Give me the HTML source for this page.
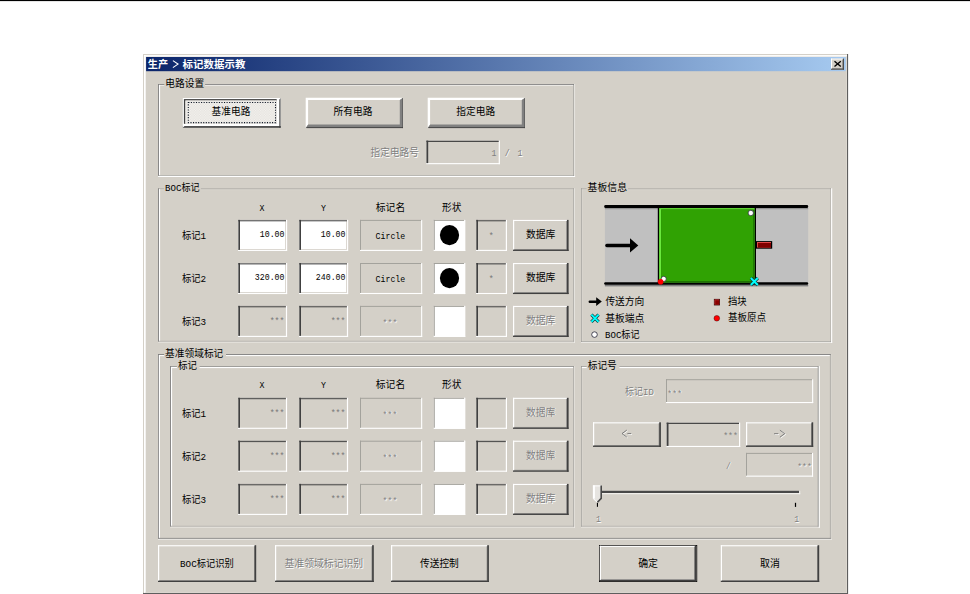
<!DOCTYPE html>
<html><head><meta charset="utf-8"><title>dialog</title>
<style>html,body{margin:0;padding:0;background:#fff;overflow:hidden}body{width:970px;height:594px;font-family:"Liberation Mono",monospace}
.t{font-family:"Liberation Mono","Noto Sans CJK SC",monospace;font-size:9.9px}
.b{font-family:"Liberation Sans","Noto Sans CJK SC",sans-serif;font-size:9.9px;font-weight:bold}</style></head>
<body>
<svg width="970" height="594" viewBox="0 0 970 594" font-family="'Liberation Mono', monospace" style="display:block" role="img" aria-label="生产 &gt; 标记数据示教">
<defs><pattern id="dz" patternUnits="userSpaceOnUse" width="2.5" height="2.5"><rect width="2.5" height="2.5" fill="#e6e3de"/><rect width="1.25" height="1.25" fill="#f3f2ef"/><rect x="1.25" y="1.25" width="1.25" height="1.25" fill="#f3f2ef"/></pattern><linearGradient id="tg" x1="0" y1="0" x2="1" y2="0"><stop offset="0" stop-color="#0a246a"/><stop offset="1" stop-color="#a6caf0"/></linearGradient>
</defs>
<rect x="0" y="0" width="970" height="594" fill="#ffffff"/>
<rect x="0" y="0" width="970" height="1.1" fill="#000000"/>
<rect x="143" y="54" width="705.1" height="540" fill="#5e5e5e"/>
<rect x="143" y="54" width="704" height="538.9" fill="#d4d0c8"/>
<rect x="144" y="55.1" width="1.7" height="537.8" fill="#ffffff"/>
<rect x="144" y="55.1" width="703" height="1.5" fill="#ffffff"/>
<rect x="845.9" y="56.6" width="1.1" height="536.3" fill="#dcd8d0"/>
<rect x="145.7" y="591.9" width="701.3" height="1" fill="#dcd8d0"/>
<rect x="146.1" y="57" width="699.7" height="14.2" fill="url(#tg)"/>
<text class="b" x="147.8" y="67.71" textLength="20.2" lengthAdjust="spacingAndGlyphs" fill="#ffffff">生产</text>
<path d="M172.9 60.6 L178 64.1 L172.9 67.6" stroke="#fff" stroke-width="1.15" fill="none"/>
<text class="b" x="182.6" y="67.71" textLength="62.8" lengthAdjust="spacingAndGlyphs" fill="#ffffff">标记数据示教</text>
<rect x="831" y="58.6" width="12.9" height="11.1" fill="#d4d0c8"/>
<rect x="831" y="58.6" width="12" height="0.9" fill="#ffffff"/>
<rect x="831" y="58.6" width="1" height="10.4" fill="#ffffff"/>
<rect x="842.3" y="59.5" width="0.6" height="9.5" fill="#808080"/>
<rect x="832" y="68.1" width="10.9" height="0.6" fill="#808080"/>
<rect x="842.9" y="58.6" width="1" height="11.1" fill="#404040"/>
<rect x="831" y="68.7" width="12.9" height="1" fill="#404040"/>
<path d="M834.5 61.2 L840.8 66.6 M840.8 61.2 L834.5 66.6" stroke="#000" stroke-width="1.35" fill="none"/>
<rect x="158.1" y="84" width="6.2" height="0.9" fill="#808080"/>
<rect x="205.1" y="84" width="368.9" height="0.9" fill="#808080"/>
<rect x="159" y="84.9" width="5.3" height="1.1" fill="#ffffff" fill-opacity="0.5"/>
<rect x="205.1" y="84.9" width="368" height="1.1" fill="#ffffff" fill-opacity="0.5"/>
<rect x="158.1" y="84" width="0.9" height="91.9" fill="#808080"/>
<rect x="159" y="84.9" width="1.1" height="90.1" fill="#ffffff"/>
<rect x="158.1" y="175" width="415.9" height="0.9" fill="#808080" fill-opacity="0.45"/>
<rect x="158.1" y="175.9" width="417" height="1.1" fill="#ffffff"/>
<rect x="573.1" y="84" width="0.9" height="91.9" fill="#808080" fill-opacity="0.45"/>
<rect x="574" y="84" width="1.1" height="93" fill="#ffffff" fill-opacity="0.4"/>
<text class="t" x="165.3" y="87.41" textLength="39" lengthAdjust="spacingAndGlyphs" fill="#000000">电路设置</text>
<rect x="182.8" y="98" width="98" height="29.8" fill="#ffffff"/>
<rect x="279" y="98" width="1.8" height="29.8" fill="#808080"/>
<rect x="182.8" y="126.1" width="98" height="1.7" fill="#404040"/>
<path d="M182.8 127.8 L182.8 126.1 L184.5 126.1 Z" fill="#fff"/>
<path d="M280.8 98 L279 98 L279 99.8 Z" fill="#fff"/>
<rect x="183.9" y="99.1" width="92.8" height="24.7" fill="#404040"/>
<rect x="185.4" y="100.5" width="91.3" height="23.3" fill="#eae8e4"/>
<rect x="185.4" y="100.5" width="91.3" height="23.3" fill="url(#dz)"/>
<rect x="188.3" y="102.5" width="87.2" height="20.1" fill="none" stroke="#0c1424" stroke-width="1.05" stroke-dasharray="1.1,1.45"/>
<text class="t" x="211.6" y="115.21" textLength="38.8" lengthAdjust="spacingAndGlyphs" fill="#000000">基准电路</text>
<rect x="305.7" y="97.7" width="97.3" height="30.4" fill="#d4d0c8"/>
<path d="M305.7 97.7 H403 L399.8 100.1 H308.1 V124.4 L305.7 128.1 Z" fill="#fff"/>
<path d="M403 97.7 V128.1 H305.7 L308.1 124.4 H399.8 V100.1 Z" fill="#808080"/>
<rect x="402.4" y="98.3" width="0.6" height="29.8" fill="#505050"/>
<rect x="306.5" y="127.2" width="96.5" height="0.9" fill="#404040"/>
<text class="t" x="333.6" y="115.11" textLength="39" lengthAdjust="spacingAndGlyphs" fill="#000000">所有电路</text>
<rect x="427.7" y="97.7" width="97.3" height="30.4" fill="#d4d0c8"/>
<path d="M427.7 97.7 H525 L521.8 100.1 H430.1 V124.4 L427.7 128.1 Z" fill="#fff"/>
<path d="M525 97.7 V128.1 H427.7 L430.1 124.4 H521.8 V100.1 Z" fill="#808080"/>
<rect x="524.4" y="98.3" width="0.6" height="29.8" fill="#505050"/>
<rect x="428.5" y="127.2" width="96.5" height="0.9" fill="#404040"/>
<text class="t" x="456.2" y="115.11" textLength="39" lengthAdjust="spacingAndGlyphs" fill="#000000">指定电路</text>
<text class="t" x="371.3" y="157.11" textLength="48.5" lengthAdjust="spacingAndGlyphs" fill="#ffffff">指定电路号</text>
<text class="t" x="370.5" y="156.31" textLength="48.5" lengthAdjust="spacingAndGlyphs" fill="#808080">指定电路号</text>
<rect x="426.2" y="140.6" width="73.7" height="23.6" fill="#d4d0c8"/>
<rect x="497.9" y="140.6" width="2" height="23.6" fill="#d4d0c8"/>
<rect x="426.2" y="162.3" width="73.7" height="1.9" fill="#d4d0c8"/>
<rect x="498.7" y="140.6" width="1.2" height="23.6" fill="#ffffff"/>
<rect x="426.2" y="163.1" width="73.7" height="1.1" fill="#ffffff"/>
<rect x="426.2" y="140.6" width="72.5" height="0.4" fill="#808080"/>
<rect x="426.2" y="141" width="72.5" height="1" fill="#484848"/>
<rect x="426.2" y="140.6" width="0.5" height="22.5" fill="#808080"/>
<rect x="426.7" y="140.6" width="1.5" height="22.5" fill="#404040"/>
<text class="t" x="491.55" y="155.85" textLength="4.95" lengthAdjust="spacingAndGlyphs" fill="#808080">1</text>
<text class="t" x="505.6" y="156.75" textLength="4.95" lengthAdjust="spacingAndGlyphs" fill="#ffffff">/</text>
<text class="t" x="504.8" y="155.95" textLength="4.95" lengthAdjust="spacingAndGlyphs" fill="#808080">/</text>
<text class="t" x="518.4" y="156.75" textLength="4.95" lengthAdjust="spacingAndGlyphs" fill="#ffffff">1</text>
<text class="t" x="517.6" y="155.95" textLength="4.95" lengthAdjust="spacingAndGlyphs" fill="#808080">1</text>
<rect x="158.1" y="188.3" width="6" height="0.9" fill="#808080" fill-opacity="0.4"/>
<rect x="200.9" y="188.3" width="373" height="0.9" fill="#808080" fill-opacity="0.4"/>
<rect x="159" y="189.2" width="5.1" height="1.1" fill="#ffffff" fill-opacity="0.1"/>
<rect x="200.9" y="189.2" width="372.1" height="1.1" fill="#ffffff" fill-opacity="0.1"/>
<rect x="158.1" y="188.3" width="0.9" height="153.4" fill="#808080"/>
<rect x="159" y="189.2" width="1.1" height="151.6" fill="#ffffff"/>
<rect x="158.1" y="340.8" width="415.8" height="0.9" fill="#808080" fill-opacity="0.4"/>
<rect x="158.1" y="341.7" width="416.9" height="1.1" fill="#ffffff" fill-opacity="0.4"/>
<rect x="573" y="188.3" width="0.9" height="153.4" fill="#808080" fill-opacity="0.45"/>
<rect x="573.9" y="188.3" width="1.1" height="154.5" fill="#ffffff" fill-opacity="0.4"/>
<text class="t" x="165.1" y="191.11" textLength="34.5" lengthAdjust="spacingAndGlyphs" fill="#000000">BOC标记</text>
<text class="t" x="259.52" y="210.65" textLength="4.95" lengthAdjust="spacingAndGlyphs" fill="#000000">X</text>
<text class="t" x="320.92" y="210.65" textLength="4.95" lengthAdjust="spacingAndGlyphs" fill="#000000">Y</text>
<text class="t" x="375.8" y="210.71" textLength="29.4" lengthAdjust="spacingAndGlyphs" fill="#000000">标记名</text>
<text class="t" x="442" y="210.71" textLength="19.3" lengthAdjust="spacingAndGlyphs" fill="#000000">形状</text>
<text class="t" x="182" y="238.84" textLength="24.2" lengthAdjust="spacingAndGlyphs" fill="#000000">标记1</text>
<rect x="238" y="219.9" width="49.1" height="31.05" fill="#ffffff"/>
<rect x="285.1" y="219.9" width="2" height="31.05" fill="#d4d0c8"/>
<rect x="238" y="249.05" width="49.1" height="1.9" fill="#d4d0c8"/>
<rect x="285.9" y="219.9" width="1.2" height="31.05" fill="#ffffff"/>
<rect x="238" y="249.85" width="49.1" height="1.1" fill="#ffffff"/>
<rect x="238" y="219.9" width="47.9" height="0.4" fill="#808080"/>
<rect x="238" y="220.3" width="47.9" height="1" fill="#484848"/>
<rect x="238" y="219.9" width="0.5" height="29.95" fill="#808080"/>
<rect x="238.5" y="219.9" width="1.5" height="29.95" fill="#404040"/>
<text class="t" x="259.75" y="236.78" textLength="24.75" lengthAdjust="spacingAndGlyphs" fill="#000000">10.00</text>
<rect x="299" y="219.9" width="49.1" height="31.05" fill="#ffffff"/>
<rect x="346.1" y="219.9" width="2" height="31.05" fill="#d4d0c8"/>
<rect x="299" y="249.05" width="49.1" height="1.9" fill="#d4d0c8"/>
<rect x="346.9" y="219.9" width="1.2" height="31.05" fill="#ffffff"/>
<rect x="299" y="249.85" width="49.1" height="1.1" fill="#ffffff"/>
<rect x="299" y="219.9" width="47.9" height="0.4" fill="#808080"/>
<rect x="299" y="220.3" width="47.9" height="1" fill="#484848"/>
<rect x="299" y="219.9" width="0.5" height="29.95" fill="#808080"/>
<rect x="299.5" y="219.9" width="1.5" height="29.95" fill="#404040"/>
<text class="t" x="320.75" y="236.78" textLength="24.75" lengthAdjust="spacingAndGlyphs" fill="#000000">10.00</text>
<rect x="360" y="219.9" width="62.2" height="31.05" fill="#d4d0c8"/>
<rect x="421.1" y="219.9" width="1.1" height="31.05" fill="#ffffff"/>
<rect x="360" y="249.85" width="62.2" height="1.1" fill="#ffffff"/>
<rect x="360" y="219.9" width="61.1" height="1" fill="#a3a29c"/>
<rect x="360" y="219.9" width="1" height="29.95" fill="#a3a29c"/>
<text class="t" x="375.55" y="238.68" textLength="29.7" lengthAdjust="spacingAndGlyphs" fill="#000000">Circle</text>
<rect x="433.8" y="219.9" width="31.4" height="31.05" fill="#ffffff"/>
<rect x="464.1" y="219.9" width="1.1" height="31.05" fill="#ffffff"/>
<rect x="433.8" y="249.85" width="31.4" height="1.1" fill="#ffffff"/>
<rect x="433.8" y="219.9" width="30.3" height="1" fill="#a3a29c"/>
<rect x="433.8" y="219.9" width="1" height="29.95" fill="#a3a29c"/>
<ellipse cx="449.5" cy="235.03" rx="9.6" ry="10.1" fill="#000"/>
<rect x="476" y="219.9" width="31" height="31.05" fill="#d4d0c8"/>
<rect x="505" y="219.9" width="2" height="31.05" fill="#d4d0c8"/>
<rect x="476" y="249.05" width="31" height="1.9" fill="#d4d0c8"/>
<rect x="505.8" y="219.9" width="1.2" height="31.05" fill="#ffffff"/>
<rect x="476" y="249.85" width="31" height="1.1" fill="#ffffff"/>
<rect x="476" y="219.9" width="29.8" height="0.4" fill="#808080"/>
<rect x="476" y="220.3" width="29.8" height="1" fill="#484848"/>
<rect x="476" y="219.9" width="0.5" height="29.95" fill="#808080"/>
<rect x="476.5" y="219.9" width="1.5" height="29.95" fill="#404040"/>
<text class="t" x="488.82" y="238.5" textLength="4.95" lengthAdjust="spacingAndGlyphs" fill="#777777">*</text>
<rect x="513" y="219.9" width="55.6" height="31.05" fill="#d4d0c8"/>
<rect x="513" y="219.9" width="54.4" height="1.1" fill="#ffffff"/>
<rect x="513" y="219.9" width="1.2" height="29.85" fill="#ffffff"/>
<rect x="566.4" y="221" width="0.6" height="28.65" fill="#808080"/>
<rect x="514.2" y="249.05" width="52.8" height="0.6" fill="#808080"/>
<rect x="566.9" y="219.9" width="1.7" height="31.05" fill="#404040"/>
<rect x="513" y="249.65" width="55.6" height="1.3" fill="#404040"/>
<text class="t" x="525.9" y="237.74" textLength="29.5" lengthAdjust="spacingAndGlyphs" fill="#000000">数据库</text>
<text class="t" x="182" y="281.94" textLength="24.2" lengthAdjust="spacingAndGlyphs" fill="#000000">标记2</text>
<rect x="238" y="263" width="49.1" height="31.05" fill="#ffffff"/>
<rect x="285.1" y="263" width="2" height="31.05" fill="#d4d0c8"/>
<rect x="238" y="292.15" width="49.1" height="1.9" fill="#d4d0c8"/>
<rect x="285.9" y="263" width="1.2" height="31.05" fill="#ffffff"/>
<rect x="238" y="292.95" width="49.1" height="1.1" fill="#ffffff"/>
<rect x="238" y="263" width="47.9" height="0.4" fill="#808080"/>
<rect x="238" y="263.4" width="47.9" height="1" fill="#484848"/>
<rect x="238" y="263" width="0.5" height="29.95" fill="#808080"/>
<rect x="238.5" y="263" width="1.5" height="29.95" fill="#404040"/>
<text class="t" x="254.8" y="279.88" textLength="29.7" lengthAdjust="spacingAndGlyphs" fill="#000000">320.00</text>
<rect x="299" y="263" width="49.1" height="31.05" fill="#ffffff"/>
<rect x="346.1" y="263" width="2" height="31.05" fill="#d4d0c8"/>
<rect x="299" y="292.15" width="49.1" height="1.9" fill="#d4d0c8"/>
<rect x="346.9" y="263" width="1.2" height="31.05" fill="#ffffff"/>
<rect x="299" y="292.95" width="49.1" height="1.1" fill="#ffffff"/>
<rect x="299" y="263" width="47.9" height="0.4" fill="#808080"/>
<rect x="299" y="263.4" width="47.9" height="1" fill="#484848"/>
<rect x="299" y="263" width="0.5" height="29.95" fill="#808080"/>
<rect x="299.5" y="263" width="1.5" height="29.95" fill="#404040"/>
<text class="t" x="315.8" y="279.88" textLength="29.7" lengthAdjust="spacingAndGlyphs" fill="#000000">240.00</text>
<rect x="360" y="263" width="62.2" height="31.05" fill="#d4d0c8"/>
<rect x="421.1" y="263" width="1.1" height="31.05" fill="#ffffff"/>
<rect x="360" y="292.95" width="62.2" height="1.1" fill="#ffffff"/>
<rect x="360" y="263" width="61.1" height="1" fill="#a3a29c"/>
<rect x="360" y="263" width="1" height="29.95" fill="#a3a29c"/>
<text class="t" x="375.55" y="281.77" textLength="29.7" lengthAdjust="spacingAndGlyphs" fill="#000000">Circle</text>
<rect x="433.8" y="263" width="31.4" height="31.05" fill="#ffffff"/>
<rect x="464.1" y="263" width="1.1" height="31.05" fill="#ffffff"/>
<rect x="433.8" y="292.95" width="31.4" height="1.1" fill="#ffffff"/>
<rect x="433.8" y="263" width="30.3" height="1" fill="#a3a29c"/>
<rect x="433.8" y="263" width="1" height="29.95" fill="#a3a29c"/>
<ellipse cx="449.5" cy="278.12" rx="9.6" ry="10.1" fill="#000"/>
<rect x="476" y="263" width="31" height="31.05" fill="#d4d0c8"/>
<rect x="505" y="263" width="2" height="31.05" fill="#d4d0c8"/>
<rect x="476" y="292.15" width="31" height="1.9" fill="#d4d0c8"/>
<rect x="505.8" y="263" width="1.2" height="31.05" fill="#ffffff"/>
<rect x="476" y="292.95" width="31" height="1.1" fill="#ffffff"/>
<rect x="476" y="263" width="29.8" height="0.4" fill="#808080"/>
<rect x="476" y="263.4" width="29.8" height="1" fill="#484848"/>
<rect x="476" y="263" width="0.5" height="29.95" fill="#808080"/>
<rect x="476.5" y="263" width="1.5" height="29.95" fill="#404040"/>
<text class="t" x="488.82" y="281.6" textLength="4.95" lengthAdjust="spacingAndGlyphs" fill="#777777">*</text>
<rect x="513" y="263" width="55.6" height="31.05" fill="#d4d0c8"/>
<rect x="513" y="263" width="54.4" height="1.1" fill="#ffffff"/>
<rect x="513" y="263" width="1.2" height="29.85" fill="#ffffff"/>
<rect x="566.4" y="264.1" width="0.6" height="28.65" fill="#808080"/>
<rect x="514.2" y="292.15" width="52.8" height="0.6" fill="#808080"/>
<rect x="566.9" y="263" width="1.7" height="31.05" fill="#404040"/>
<rect x="513" y="292.75" width="55.6" height="1.3" fill="#404040"/>
<text class="t" x="525.9" y="280.84" textLength="29.5" lengthAdjust="spacingAndGlyphs" fill="#000000">数据库</text>
<text class="t" x="182" y="324.84" textLength="24.2" lengthAdjust="spacingAndGlyphs" fill="#000000">标记3</text>
<rect x="238" y="305.9" width="49.1" height="31.05" fill="#d4d0c8"/>
<rect x="285.1" y="305.9" width="2" height="31.05" fill="#d4d0c8"/>
<rect x="238" y="335.05" width="49.1" height="1.9" fill="#d4d0c8"/>
<rect x="285.9" y="305.9" width="1.2" height="31.05" fill="#ffffff"/>
<rect x="238" y="335.85" width="49.1" height="1.1" fill="#ffffff"/>
<rect x="238" y="305.9" width="47.9" height="0.4" fill="#808080"/>
<rect x="238" y="306.3" width="47.9" height="1" fill="#484848"/>
<rect x="238" y="305.9" width="0.5" height="29.95" fill="#808080"/>
<rect x="238.5" y="305.9" width="1.5" height="29.95" fill="#404040"/>
<text class="t" x="269.65" y="324" textLength="14.85" lengthAdjust="spacingAndGlyphs" fill="#777777">***</text>
<rect x="299" y="305.9" width="49.1" height="31.05" fill="#d4d0c8"/>
<rect x="346.1" y="305.9" width="2" height="31.05" fill="#d4d0c8"/>
<rect x="299" y="335.05" width="49.1" height="1.9" fill="#d4d0c8"/>
<rect x="346.9" y="305.9" width="1.2" height="31.05" fill="#ffffff"/>
<rect x="299" y="335.85" width="49.1" height="1.1" fill="#ffffff"/>
<rect x="299" y="305.9" width="47.9" height="0.4" fill="#808080"/>
<rect x="299" y="306.3" width="47.9" height="1" fill="#484848"/>
<rect x="299" y="305.9" width="0.5" height="29.95" fill="#808080"/>
<rect x="299.5" y="305.9" width="1.5" height="29.95" fill="#404040"/>
<text class="t" x="330.65" y="324" textLength="14.85" lengthAdjust="spacingAndGlyphs" fill="#777777">***</text>
<rect x="360" y="305.9" width="62.2" height="31.05" fill="#d4d0c8"/>
<rect x="421.1" y="305.9" width="1.1" height="31.05" fill="#ffffff"/>
<rect x="360" y="335.85" width="62.2" height="1.1" fill="#ffffff"/>
<rect x="360" y="305.9" width="61.1" height="1" fill="#a3a29c"/>
<rect x="360" y="305.9" width="1" height="29.95" fill="#a3a29c"/>
<text class="t" x="383.38" y="326.5" textLength="14.85" lengthAdjust="spacingAndGlyphs" fill="#ffffff">***</text>
<text class="t" x="382.58" y="325.7" textLength="14.85" lengthAdjust="spacingAndGlyphs" fill="#808080">***</text>
<rect x="433.8" y="305.9" width="31.4" height="31.05" fill="#ffffff"/>
<rect x="464.1" y="305.9" width="1.1" height="31.05" fill="#ffffff"/>
<rect x="433.8" y="335.85" width="31.4" height="1.1" fill="#ffffff"/>
<rect x="433.8" y="305.9" width="30.3" height="1" fill="#a3a29c"/>
<rect x="433.8" y="305.9" width="1" height="29.95" fill="#a3a29c"/>
<rect x="476" y="305.9" width="31" height="31.05" fill="#d4d0c8"/>
<rect x="505" y="305.9" width="2" height="31.05" fill="#d4d0c8"/>
<rect x="476" y="335.05" width="31" height="1.9" fill="#d4d0c8"/>
<rect x="505.8" y="305.9" width="1.2" height="31.05" fill="#ffffff"/>
<rect x="476" y="335.85" width="31" height="1.1" fill="#ffffff"/>
<rect x="476" y="305.9" width="29.8" height="0.4" fill="#808080"/>
<rect x="476" y="306.3" width="29.8" height="1" fill="#484848"/>
<rect x="476" y="305.9" width="0.5" height="29.95" fill="#808080"/>
<rect x="476.5" y="305.9" width="1.5" height="29.95" fill="#404040"/>
<rect x="513" y="305.9" width="55.6" height="31.05" fill="#d4d0c8"/>
<rect x="513" y="305.9" width="54.4" height="1.1" fill="#ffffff"/>
<rect x="513" y="305.9" width="1.2" height="29.85" fill="#ffffff"/>
<rect x="566.4" y="307" width="0.6" height="28.65" fill="#808080"/>
<rect x="514.2" y="335.05" width="52.8" height="0.6" fill="#808080"/>
<rect x="566.9" y="305.9" width="1.7" height="31.05" fill="#404040"/>
<rect x="513" y="335.65" width="55.6" height="1.3" fill="#404040"/>
<text class="t" x="526.7" y="324.54" textLength="29.5" lengthAdjust="spacingAndGlyphs" fill="#ffffff">数据库</text>
<text class="t" x="525.9" y="323.74" textLength="29.5" lengthAdjust="spacingAndGlyphs" fill="#808080">数据库</text>
<rect x="581" y="188.3" width="5.6" height="0.9" fill="#808080" fill-opacity="0.4"/>
<rect x="628" y="188.3" width="203.1" height="0.9" fill="#808080" fill-opacity="0.4"/>
<rect x="581.9" y="189.2" width="4.7" height="1.1" fill="#ffffff" fill-opacity="0.1"/>
<rect x="628" y="189.2" width="202.2" height="1.1" fill="#ffffff" fill-opacity="0.1"/>
<rect x="581" y="188.3" width="0.9" height="153.6" fill="#808080" fill-opacity="0.45"/>
<rect x="581.9" y="189.2" width="1.1" height="151.8" fill="#ffffff" fill-opacity="0.1"/>
<rect x="581" y="341" width="250.1" height="0.9" fill="#808080" fill-opacity="0.45"/>
<rect x="581" y="341.9" width="251.2" height="1.1" fill="#ffffff" fill-opacity="0.5"/>
<rect x="830.2" y="188.3" width="0.9" height="153.6" fill="#808080" fill-opacity="0.35"/>
<rect x="831.1" y="188.3" width="1.1" height="154.7" fill="#ffffff"/>
<text class="t" x="587.6" y="191.11" textLength="39.4" lengthAdjust="spacingAndGlyphs" fill="#000000">基板信息</text>
<rect x="604.9" y="205.2" width="203.3" height="80.8" fill="#c0c0c0"/>
<rect x="604.9" y="208.1" width="203.3" height="1.1" fill="#8e8e8e"/>
<rect x="604.9" y="284.7" width="203.3" height="1.7" fill="#808080"/>
<rect x="604.2" y="205.1" width="204" height="3" rx="1.4" fill="#000"/>
<rect x="604.2" y="282.2" width="204" height="2.6" rx="1.2" fill="#000"/>
<rect x="657.8" y="207" width="98.2" height="76" fill="#000000"/>
<rect x="659.1" y="208.1" width="95.6" height="74.4" fill="#6ae83c"/>
<rect x="661.2" y="209.5" width="93.5" height="73" fill="#1a6a00"/>
<rect x="661.2" y="209.5" width="92.1" height="71.7" fill="#30a203"/>
<rect x="605.2" y="243.7" width="26.5" height="3.5" rx="1.6" fill="#000"/>
<path d="M630 238.2 L638.3 245.4 L630 252.4 Z" fill="#000"/>
<rect x="756" y="241.1" width="16.2" height="7.6" fill="#000000"/>
<rect x="757" y="242" width="14" height="5.6" fill="#e04848"/>
<rect x="758" y="243" width="13" height="4.6" fill="#800000"/>
<circle cx="750.8" cy="213" r="2.7" fill="#fff" stroke="#223" stroke-width="0.7"/>
<circle cx="663.7" cy="278.9" r="2.6" fill="#fff" stroke="#122" stroke-width="0.7"/>
<circle cx="660.6" cy="281.7" r="2.8" fill="#ff0000"/>
<path d="M750.8 278 L757.8 285 M757.8 278 L750.8 285" stroke="#103838" stroke-width="3.2" fill="none"/>
<path d="M750.8 278 L757.8 285 M757.8 278 L750.8 285" stroke="#00ffff" stroke-width="1.9" fill="none"/>
<rect x="588.6" y="300.4" width="9" height="2.6" rx="1.2" fill="#000"/>
<path d="M596.2 297.2 L601.8 301.6 L596.2 305.9 Z" fill="#000"/>
<text class="t" x="605.4" y="305.11" textLength="38.9" lengthAdjust="spacingAndGlyphs" fill="#000000">传送方向</text>
<rect x="713.9" y="298.9" width="6" height="6.5" fill="#300000"/>
<rect x="714.4" y="299.4" width="4.8" height="5.2" fill="#c04040"/>
<rect x="715.2" y="300.2" width="4" height="4.4" fill="#8a0000"/>
<text class="t" x="728" y="304.91" textLength="18.7" lengthAdjust="spacingAndGlyphs" fill="#000000">挡块</text>
<path d="M591.4 314.6 L598.6 321.8 M598.6 314.6 L591.4 321.8" stroke="#103838" stroke-width="3.2" fill="none"/>
<path d="M591.4 314.6 L598.6 321.8 M598.6 314.6 L591.4 321.8" stroke="#00ffff" stroke-width="1.9" fill="none"/>
<text class="t" x="605.2" y="321.51" textLength="39.1" lengthAdjust="spacingAndGlyphs" fill="#000000">基板端点</text>
<circle cx="716.8" cy="318.3" r="2.8" fill="#ff0000" stroke="#401010" stroke-width="0.5"/>
<text class="t" x="728" y="321.41" textLength="38.1" lengthAdjust="spacingAndGlyphs" fill="#000000">基板原点</text>
<circle cx="594.5" cy="334.6" r="2.8" fill="#fff" stroke="#223" stroke-width="0.8"/>
<text class="t" x="605" y="337.51" textLength="34.5" lengthAdjust="spacingAndGlyphs" fill="#000000">BOC标记</text>
<rect x="158" y="354.1" width="6.1" height="0.9" fill="#808080"/>
<rect x="226" y="354.1" width="604.8" height="0.9" fill="#808080"/>
<rect x="158.9" y="355" width="5.2" height="1.1" fill="#ffffff" fill-opacity="0.9"/>
<rect x="226" y="355" width="603.9" height="1.1" fill="#ffffff" fill-opacity="0.9"/>
<rect x="158" y="354.1" width="0.9" height="184.7" fill="#808080"/>
<rect x="158.9" y="355" width="1.1" height="182.9" fill="#ffffff"/>
<rect x="158" y="537.9" width="672.8" height="0.9" fill="#808080"/>
<rect x="158" y="538.8" width="673.9" height="1.1" fill="#ffffff" fill-opacity="0.5"/>
<rect x="829.9" y="354.1" width="0.9" height="184.7" fill="#808080" fill-opacity="0.45"/>
<rect x="830.8" y="354.1" width="1.1" height="185.8" fill="#ffffff" fill-opacity="0.1"/>
<text class="t" x="165.1" y="357.31" textLength="58.2" lengthAdjust="spacingAndGlyphs" fill="#000000">基准领域标记</text>
<rect x="170.1" y="366.1" width="6.8" height="0.9" fill="#808080" fill-opacity="0.7"/>
<rect x="199.6" y="366.1" width="374.3" height="0.9" fill="#808080" fill-opacity="0.7"/>
<rect x="171" y="367" width="5.9" height="1.1" fill="#ffffff"/>
<rect x="199.6" y="367" width="373.4" height="1.1" fill="#ffffff"/>
<rect x="170.1" y="366.1" width="0.9" height="160.6" fill="#808080"/>
<rect x="171" y="367" width="1.1" height="158.8" fill="#ffffff"/>
<rect x="170.1" y="525.8" width="403.8" height="0.9" fill="#808080" fill-opacity="0.4"/>
<rect x="170.1" y="526.7" width="404.9" height="1.1" fill="#ffffff" fill-opacity="0.4"/>
<rect x="573" y="366.1" width="0.9" height="160.6" fill="#808080" fill-opacity="0.45"/>
<rect x="573.9" y="366.1" width="1.1" height="161.7" fill="#ffffff" fill-opacity="0.3"/>
<text class="t" x="177.9" y="369.01" textLength="19" lengthAdjust="spacingAndGlyphs" fill="#000000">标记</text>
<text class="t" x="259.52" y="388.25" textLength="4.95" lengthAdjust="spacingAndGlyphs" fill="#000000">X</text>
<text class="t" x="320.92" y="388.25" textLength="4.95" lengthAdjust="spacingAndGlyphs" fill="#000000">Y</text>
<text class="t" x="375.8" y="388.31" textLength="29.4" lengthAdjust="spacingAndGlyphs" fill="#000000">标记名</text>
<text class="t" x="442" y="388.31" textLength="19.3" lengthAdjust="spacingAndGlyphs" fill="#000000">形状</text>
<text class="t" x="182" y="416.74" textLength="24.2" lengthAdjust="spacingAndGlyphs" fill="#000000">标记1</text>
<rect x="238" y="397.8" width="49.1" height="31.05" fill="#d4d0c8"/>
<rect x="285.1" y="397.8" width="2" height="31.05" fill="#d4d0c8"/>
<rect x="238" y="426.95" width="49.1" height="1.9" fill="#d4d0c8"/>
<rect x="285.9" y="397.8" width="1.2" height="31.05" fill="#ffffff"/>
<rect x="238" y="427.75" width="49.1" height="1.1" fill="#ffffff"/>
<rect x="238" y="397.8" width="47.9" height="0.4" fill="#808080"/>
<rect x="238" y="398.2" width="47.9" height="1" fill="#484848"/>
<rect x="238" y="397.8" width="0.5" height="29.95" fill="#808080"/>
<rect x="238.5" y="397.8" width="1.5" height="29.95" fill="#404040"/>
<text class="t" x="269.65" y="415.9" textLength="14.85" lengthAdjust="spacingAndGlyphs" fill="#777777">***</text>
<rect x="299" y="397.8" width="49.1" height="31.05" fill="#d4d0c8"/>
<rect x="346.1" y="397.8" width="2" height="31.05" fill="#d4d0c8"/>
<rect x="299" y="426.95" width="49.1" height="1.9" fill="#d4d0c8"/>
<rect x="346.9" y="397.8" width="1.2" height="31.05" fill="#ffffff"/>
<rect x="299" y="427.75" width="49.1" height="1.1" fill="#ffffff"/>
<rect x="299" y="397.8" width="47.9" height="0.4" fill="#808080"/>
<rect x="299" y="398.2" width="47.9" height="1" fill="#484848"/>
<rect x="299" y="397.8" width="0.5" height="29.95" fill="#808080"/>
<rect x="299.5" y="397.8" width="1.5" height="29.95" fill="#404040"/>
<text class="t" x="330.65" y="415.9" textLength="14.85" lengthAdjust="spacingAndGlyphs" fill="#777777">***</text>
<rect x="360" y="397.8" width="62.2" height="31.05" fill="#d4d0c8"/>
<rect x="421.1" y="397.8" width="1.1" height="31.05" fill="#ffffff"/>
<rect x="360" y="427.75" width="62.2" height="1.1" fill="#ffffff"/>
<rect x="360" y="397.8" width="61.1" height="1" fill="#a3a29c"/>
<rect x="360" y="397.8" width="1" height="29.95" fill="#a3a29c"/>
<text class="t" x="383.38" y="418.4" textLength="14.85" lengthAdjust="spacingAndGlyphs" fill="#ffffff">***</text>
<text class="t" x="382.58" y="417.6" textLength="14.85" lengthAdjust="spacingAndGlyphs" fill="#808080">***</text>
<rect x="433.8" y="397.8" width="31.4" height="31.05" fill="#ffffff"/>
<rect x="464.1" y="397.8" width="1.1" height="31.05" fill="#ffffff"/>
<rect x="433.8" y="427.75" width="31.4" height="1.1" fill="#ffffff"/>
<rect x="433.8" y="397.8" width="30.3" height="1" fill="#a3a29c"/>
<rect x="433.8" y="397.8" width="1" height="29.95" fill="#a3a29c"/>
<rect x="476" y="397.8" width="31" height="31.05" fill="#d4d0c8"/>
<rect x="505" y="397.8" width="2" height="31.05" fill="#d4d0c8"/>
<rect x="476" y="426.95" width="31" height="1.9" fill="#d4d0c8"/>
<rect x="505.8" y="397.8" width="1.2" height="31.05" fill="#ffffff"/>
<rect x="476" y="427.75" width="31" height="1.1" fill="#ffffff"/>
<rect x="476" y="397.8" width="29.8" height="0.4" fill="#808080"/>
<rect x="476" y="398.2" width="29.8" height="1" fill="#484848"/>
<rect x="476" y="397.8" width="0.5" height="29.95" fill="#808080"/>
<rect x="476.5" y="397.8" width="1.5" height="29.95" fill="#404040"/>
<rect x="513" y="397.8" width="55.6" height="31.05" fill="#d4d0c8"/>
<rect x="513" y="397.8" width="54.4" height="1.1" fill="#ffffff"/>
<rect x="513" y="397.8" width="1.2" height="29.85" fill="#ffffff"/>
<rect x="566.4" y="398.9" width="0.6" height="28.65" fill="#808080"/>
<rect x="514.2" y="426.95" width="52.8" height="0.6" fill="#808080"/>
<rect x="566.9" y="397.8" width="1.7" height="31.05" fill="#404040"/>
<rect x="513" y="427.55" width="55.6" height="1.3" fill="#404040"/>
<text class="t" x="526.7" y="416.44" textLength="29.5" lengthAdjust="spacingAndGlyphs" fill="#ffffff">数据库</text>
<text class="t" x="525.9" y="415.64" textLength="29.5" lengthAdjust="spacingAndGlyphs" fill="#808080">数据库</text>
<text class="t" x="182" y="459.64" textLength="24.2" lengthAdjust="spacingAndGlyphs" fill="#000000">标记2</text>
<rect x="238" y="440.7" width="49.1" height="31.05" fill="#d4d0c8"/>
<rect x="285.1" y="440.7" width="2" height="31.05" fill="#d4d0c8"/>
<rect x="238" y="469.85" width="49.1" height="1.9" fill="#d4d0c8"/>
<rect x="285.9" y="440.7" width="1.2" height="31.05" fill="#ffffff"/>
<rect x="238" y="470.65" width="49.1" height="1.1" fill="#ffffff"/>
<rect x="238" y="440.7" width="47.9" height="0.4" fill="#808080"/>
<rect x="238" y="441.1" width="47.9" height="1" fill="#484848"/>
<rect x="238" y="440.7" width="0.5" height="29.95" fill="#808080"/>
<rect x="238.5" y="440.7" width="1.5" height="29.95" fill="#404040"/>
<text class="t" x="269.65" y="458.8" textLength="14.85" lengthAdjust="spacingAndGlyphs" fill="#777777">***</text>
<rect x="299" y="440.7" width="49.1" height="31.05" fill="#d4d0c8"/>
<rect x="346.1" y="440.7" width="2" height="31.05" fill="#d4d0c8"/>
<rect x="299" y="469.85" width="49.1" height="1.9" fill="#d4d0c8"/>
<rect x="346.9" y="440.7" width="1.2" height="31.05" fill="#ffffff"/>
<rect x="299" y="470.65" width="49.1" height="1.1" fill="#ffffff"/>
<rect x="299" y="440.7" width="47.9" height="0.4" fill="#808080"/>
<rect x="299" y="441.1" width="47.9" height="1" fill="#484848"/>
<rect x="299" y="440.7" width="0.5" height="29.95" fill="#808080"/>
<rect x="299.5" y="440.7" width="1.5" height="29.95" fill="#404040"/>
<text class="t" x="330.65" y="458.8" textLength="14.85" lengthAdjust="spacingAndGlyphs" fill="#777777">***</text>
<rect x="360" y="440.7" width="62.2" height="31.05" fill="#d4d0c8"/>
<rect x="421.1" y="440.7" width="1.1" height="31.05" fill="#ffffff"/>
<rect x="360" y="470.65" width="62.2" height="1.1" fill="#ffffff"/>
<rect x="360" y="440.7" width="61.1" height="1" fill="#a3a29c"/>
<rect x="360" y="440.7" width="1" height="29.95" fill="#a3a29c"/>
<text class="t" x="383.38" y="461.3" textLength="14.85" lengthAdjust="spacingAndGlyphs" fill="#ffffff">***</text>
<text class="t" x="382.58" y="460.5" textLength="14.85" lengthAdjust="spacingAndGlyphs" fill="#808080">***</text>
<rect x="433.8" y="440.7" width="31.4" height="31.05" fill="#ffffff"/>
<rect x="464.1" y="440.7" width="1.1" height="31.05" fill="#ffffff"/>
<rect x="433.8" y="470.65" width="31.4" height="1.1" fill="#ffffff"/>
<rect x="433.8" y="440.7" width="30.3" height="1" fill="#a3a29c"/>
<rect x="433.8" y="440.7" width="1" height="29.95" fill="#a3a29c"/>
<rect x="476" y="440.7" width="31" height="31.05" fill="#d4d0c8"/>
<rect x="505" y="440.7" width="2" height="31.05" fill="#d4d0c8"/>
<rect x="476" y="469.85" width="31" height="1.9" fill="#d4d0c8"/>
<rect x="505.8" y="440.7" width="1.2" height="31.05" fill="#ffffff"/>
<rect x="476" y="470.65" width="31" height="1.1" fill="#ffffff"/>
<rect x="476" y="440.7" width="29.8" height="0.4" fill="#808080"/>
<rect x="476" y="441.1" width="29.8" height="1" fill="#484848"/>
<rect x="476" y="440.7" width="0.5" height="29.95" fill="#808080"/>
<rect x="476.5" y="440.7" width="1.5" height="29.95" fill="#404040"/>
<rect x="513" y="440.7" width="55.6" height="31.05" fill="#d4d0c8"/>
<rect x="513" y="440.7" width="54.4" height="1.1" fill="#ffffff"/>
<rect x="513" y="440.7" width="1.2" height="29.85" fill="#ffffff"/>
<rect x="566.4" y="441.8" width="0.6" height="28.65" fill="#808080"/>
<rect x="514.2" y="469.85" width="52.8" height="0.6" fill="#808080"/>
<rect x="566.9" y="440.7" width="1.7" height="31.05" fill="#404040"/>
<rect x="513" y="470.45" width="55.6" height="1.3" fill="#404040"/>
<text class="t" x="526.7" y="459.34" textLength="29.5" lengthAdjust="spacingAndGlyphs" fill="#ffffff">数据库</text>
<text class="t" x="525.9" y="458.54" textLength="29.5" lengthAdjust="spacingAndGlyphs" fill="#808080">数据库</text>
<text class="t" x="182" y="502.84" textLength="24.2" lengthAdjust="spacingAndGlyphs" fill="#000000">标记3</text>
<rect x="238" y="483.9" width="49.1" height="31.05" fill="#d4d0c8"/>
<rect x="285.1" y="483.9" width="2" height="31.05" fill="#d4d0c8"/>
<rect x="238" y="513.05" width="49.1" height="1.9" fill="#d4d0c8"/>
<rect x="285.9" y="483.9" width="1.2" height="31.05" fill="#ffffff"/>
<rect x="238" y="513.85" width="49.1" height="1.1" fill="#ffffff"/>
<rect x="238" y="483.9" width="47.9" height="0.4" fill="#808080"/>
<rect x="238" y="484.3" width="47.9" height="1" fill="#484848"/>
<rect x="238" y="483.9" width="0.5" height="29.95" fill="#808080"/>
<rect x="238.5" y="483.9" width="1.5" height="29.95" fill="#404040"/>
<text class="t" x="269.65" y="502" textLength="14.85" lengthAdjust="spacingAndGlyphs" fill="#777777">***</text>
<rect x="299" y="483.9" width="49.1" height="31.05" fill="#d4d0c8"/>
<rect x="346.1" y="483.9" width="2" height="31.05" fill="#d4d0c8"/>
<rect x="299" y="513.05" width="49.1" height="1.9" fill="#d4d0c8"/>
<rect x="346.9" y="483.9" width="1.2" height="31.05" fill="#ffffff"/>
<rect x="299" y="513.85" width="49.1" height="1.1" fill="#ffffff"/>
<rect x="299" y="483.9" width="47.9" height="0.4" fill="#808080"/>
<rect x="299" y="484.3" width="47.9" height="1" fill="#484848"/>
<rect x="299" y="483.9" width="0.5" height="29.95" fill="#808080"/>
<rect x="299.5" y="483.9" width="1.5" height="29.95" fill="#404040"/>
<text class="t" x="330.65" y="502" textLength="14.85" lengthAdjust="spacingAndGlyphs" fill="#777777">***</text>
<rect x="360" y="483.9" width="62.2" height="31.05" fill="#d4d0c8"/>
<rect x="421.1" y="483.9" width="1.1" height="31.05" fill="#ffffff"/>
<rect x="360" y="513.85" width="62.2" height="1.1" fill="#ffffff"/>
<rect x="360" y="483.9" width="61.1" height="1" fill="#a3a29c"/>
<rect x="360" y="483.9" width="1" height="29.95" fill="#a3a29c"/>
<text class="t" x="383.38" y="504.5" textLength="14.85" lengthAdjust="spacingAndGlyphs" fill="#ffffff">***</text>
<text class="t" x="382.58" y="503.7" textLength="14.85" lengthAdjust="spacingAndGlyphs" fill="#808080">***</text>
<rect x="433.8" y="483.9" width="31.4" height="31.05" fill="#ffffff"/>
<rect x="464.1" y="483.9" width="1.1" height="31.05" fill="#ffffff"/>
<rect x="433.8" y="513.85" width="31.4" height="1.1" fill="#ffffff"/>
<rect x="433.8" y="483.9" width="30.3" height="1" fill="#a3a29c"/>
<rect x="433.8" y="483.9" width="1" height="29.95" fill="#a3a29c"/>
<rect x="476" y="483.9" width="31" height="31.05" fill="#d4d0c8"/>
<rect x="505" y="483.9" width="2" height="31.05" fill="#d4d0c8"/>
<rect x="476" y="513.05" width="31" height="1.9" fill="#d4d0c8"/>
<rect x="505.8" y="483.9" width="1.2" height="31.05" fill="#ffffff"/>
<rect x="476" y="513.85" width="31" height="1.1" fill="#ffffff"/>
<rect x="476" y="483.9" width="29.8" height="0.4" fill="#808080"/>
<rect x="476" y="484.3" width="29.8" height="1" fill="#484848"/>
<rect x="476" y="483.9" width="0.5" height="29.95" fill="#808080"/>
<rect x="476.5" y="483.9" width="1.5" height="29.95" fill="#404040"/>
<rect x="513" y="483.9" width="55.6" height="31.05" fill="#d4d0c8"/>
<rect x="513" y="483.9" width="54.4" height="1.1" fill="#ffffff"/>
<rect x="513" y="483.9" width="1.2" height="29.85" fill="#ffffff"/>
<rect x="566.4" y="485" width="0.6" height="28.65" fill="#808080"/>
<rect x="514.2" y="513.05" width="52.8" height="0.6" fill="#808080"/>
<rect x="566.9" y="483.9" width="1.7" height="31.05" fill="#404040"/>
<rect x="513" y="513.65" width="55.6" height="1.3" fill="#404040"/>
<text class="t" x="526.7" y="502.54" textLength="29.5" lengthAdjust="spacingAndGlyphs" fill="#ffffff">数据库</text>
<text class="t" x="525.9" y="501.74" textLength="29.5" lengthAdjust="spacingAndGlyphs" fill="#808080">数据库</text>
<rect x="581" y="366.1" width="5.7" height="0.9" fill="#808080" fill-opacity="0.5"/>
<rect x="619.5" y="366.1" width="199.2" height="0.9" fill="#808080" fill-opacity="0.5"/>
<rect x="581.9" y="367" width="4.8" height="1.1" fill="#ffffff"/>
<rect x="619.5" y="367" width="198.3" height="1.1" fill="#ffffff"/>
<rect x="581" y="366.1" width="0.9" height="160.6" fill="#808080" fill-opacity="0.45"/>
<rect x="581.9" y="367" width="1.1" height="158.8" fill="#ffffff" fill-opacity="0.1"/>
<rect x="581" y="525.8" width="237.7" height="0.9" fill="#808080" fill-opacity="0.4"/>
<rect x="581" y="526.7" width="238.8" height="1.1" fill="#ffffff" fill-opacity="0.4"/>
<rect x="817.8" y="366.1" width="0.9" height="160.6" fill="#808080"/>
<rect x="818.7" y="366.1" width="1.1" height="161.7" fill="#ffffff"/>
<text class="t" x="587.7" y="369.21" textLength="29.1" lengthAdjust="spacingAndGlyphs" fill="#000000">标记号</text>
<text class="t" x="625.8" y="395.51" textLength="28.8" lengthAdjust="spacingAndGlyphs" fill="#ffffff">标记ID</text>
<text class="t" x="625" y="394.71" textLength="28.8" lengthAdjust="spacingAndGlyphs" fill="#808080">标记ID</text>
<rect x="666" y="379.2" width="147.2" height="23.9" fill="#d4d0c8"/>
<rect x="812.1" y="379.2" width="1.1" height="23.9" fill="#ffffff"/>
<rect x="666" y="402" width="147.2" height="1.1" fill="#ffffff"/>
<rect x="666" y="379.2" width="146.1" height="1" fill="#a3a29c"/>
<rect x="666" y="379.2" width="1" height="22.8" fill="#a3a29c"/>
<text class="t" x="668.1" y="397.4" textLength="14.85" lengthAdjust="spacingAndGlyphs" fill="#ffffff">***</text>
<text class="t" x="667.3" y="396.6" textLength="14.85" lengthAdjust="spacingAndGlyphs" fill="#808080">***</text>
<rect x="593" y="422.3" width="67.9" height="24.6" fill="#d4d0c8"/>
<rect x="593" y="422.3" width="66.7" height="1.1" fill="#ffffff"/>
<rect x="593" y="422.3" width="1.2" height="23.4" fill="#ffffff"/>
<rect x="658.7" y="423.4" width="0.6" height="22.2" fill="#808080"/>
<rect x="594.2" y="445" width="65.1" height="0.6" fill="#808080"/>
<rect x="659.2" y="422.3" width="1.7" height="24.6" fill="#404040"/>
<rect x="593" y="445.6" width="67.9" height="1.3" fill="#404040"/>
<g fill="#ffffff"></g>
<g fill="#808080"></g>
<path d="M627.6 430.9L622.8 434.4L627.6 437.9M628.2 434.4H632" stroke="#ffffff" stroke-width="0.85" fill="none"/>
<path d="M626.8 430.1L622 433.6L626.8 437.1M627.4 433.6H631.2" stroke="#6a6a6a" stroke-width="0.85" fill="none"/>
<rect x="666.5" y="422.6" width="73.7" height="24.4" fill="#d4d0c8"/>
<rect x="738.2" y="422.6" width="2" height="24.4" fill="#d4d0c8"/>
<rect x="666.5" y="445.1" width="73.7" height="1.9" fill="#d4d0c8"/>
<rect x="739" y="422.6" width="1.2" height="24.4" fill="#ffffff"/>
<rect x="666.5" y="445.9" width="73.7" height="1.1" fill="#ffffff"/>
<rect x="666.5" y="422.6" width="72.5" height="0.4" fill="#808080"/>
<rect x="666.5" y="423" width="72.5" height="1" fill="#484848"/>
<rect x="666.5" y="422.6" width="0.5" height="23.3" fill="#808080"/>
<rect x="667" y="422.6" width="1.5" height="23.3" fill="#404040"/>
<text class="t" x="723.15" y="439.1" textLength="14.85" lengthAdjust="spacingAndGlyphs" fill="#808080">***</text>
<rect x="746" y="422.3" width="67.2" height="24.6" fill="#d4d0c8"/>
<rect x="746" y="422.3" width="66" height="1.1" fill="#ffffff"/>
<rect x="746" y="422.3" width="1.2" height="23.4" fill="#ffffff"/>
<rect x="811" y="423.4" width="0.6" height="22.2" fill="#808080"/>
<rect x="747.2" y="445" width="64.4" height="0.6" fill="#808080"/>
<rect x="811.5" y="422.3" width="1.7" height="24.6" fill="#404040"/>
<rect x="746" y="445.6" width="67.2" height="1.3" fill="#404040"/>
<g fill="#ffffff"></g>
<g fill="#808080"></g>
<path d="M780.7 431L785.5 434.5L780.7 438M774.9 434.5H779.1" stroke="#ffffff" stroke-width="0.85" fill="none"/>
<path d="M779.9 430.2L784.7 433.7L779.9 437.2M774.1 433.7H778.3" stroke="#6a6a6a" stroke-width="0.85" fill="none"/>
<text class="t" x="726.8" y="469.35" textLength="4.95" lengthAdjust="spacingAndGlyphs" fill="#ffffff">/</text>
<text class="t" x="726" y="468.55" textLength="4.95" lengthAdjust="spacingAndGlyphs" fill="#808080">/</text>
<rect x="746" y="452.9" width="67.1" height="23.8" fill="#d4d0c8"/>
<rect x="812" y="452.9" width="1.1" height="23.8" fill="#ffffff"/>
<rect x="746" y="475.6" width="67.1" height="1.1" fill="#ffffff"/>
<rect x="746" y="452.9" width="66" height="1" fill="#a3a29c"/>
<rect x="746" y="452.9" width="1" height="22.7" fill="#a3a29c"/>
<text class="t" x="797.95" y="470.7" textLength="14.85" lengthAdjust="spacingAndGlyphs" fill="#ffffff">***</text>
<text class="t" x="797.15" y="469.9" textLength="14.85" lengthAdjust="spacingAndGlyphs" fill="#808080">***</text>
<rect x="601" y="490.8" width="198.2" height="2.3" fill="#484848"/>
<rect x="601" y="493.1" width="199.2" height="1.1" fill="#f4f3f0"/>
<rect x="799.2" y="490.8" width="1" height="3.4" fill="#f4f3f0"/>
<path d="M592.9 485.4 H602 V498.6 L597.5 502.6 L592.9 498.6 Z" fill="#e6e4e0"/>
<path d="M593.9 498.6 V485.4" fill="none" stroke="#fff" stroke-width="2"/>
<path d="M592.9 485.9 H601" fill="none" stroke="#fff" stroke-width="1"/>
<path d="M601.2 485.4 V498.4 L597.5 502.2" fill="none" stroke="#484848" stroke-width="1.6"/>
<path d="M593.2 498.6 L597.3 502.4" fill="none" stroke="#fff" stroke-width="1"/>
<rect x="596.9" y="502.8" width="1.1" height="4" fill="#000000"/>
<rect x="794.9" y="502.8" width="1.2" height="4.1" fill="#000000"/>
<text class="t" x="596.72" y="523.25" textLength="4.95" lengthAdjust="spacingAndGlyphs" fill="#ffffff">1</text>
<text class="t" x="595.92" y="522.45" textLength="4.95" lengthAdjust="spacingAndGlyphs" fill="#808080">1</text>
<text class="t" x="795.12" y="523.25" textLength="4.95" lengthAdjust="spacingAndGlyphs" fill="#ffffff">1</text>
<text class="t" x="794.32" y="522.45" textLength="4.95" lengthAdjust="spacingAndGlyphs" fill="#808080">1</text>
<rect x="158" y="545.2" width="98.2" height="36.8" fill="#d4d0c8"/>
<rect x="158" y="545.2" width="97" height="1.1" fill="#ffffff"/>
<rect x="158" y="545.2" width="1.2" height="35.6" fill="#ffffff"/>
<rect x="254" y="546.3" width="0.6" height="34.4" fill="#808080"/>
<rect x="159.2" y="580.1" width="95.4" height="0.6" fill="#808080"/>
<rect x="254.5" y="545.2" width="1.7" height="36.8" fill="#404040"/>
<rect x="158" y="580.7" width="98.2" height="1.3" fill="#404040"/>
<text class="t" x="180" y="566.71" textLength="53.8" lengthAdjust="spacingAndGlyphs" fill="#000000">BOC标记识别</text>
<rect x="275" y="545.2" width="98.8" height="36.8" fill="#d4d0c8"/>
<rect x="275" y="545.2" width="97.6" height="1.1" fill="#ffffff"/>
<rect x="275" y="545.2" width="1.2" height="35.6" fill="#ffffff"/>
<rect x="371.6" y="546.3" width="0.6" height="34.4" fill="#808080"/>
<rect x="276.2" y="580.1" width="96" height="0.6" fill="#808080"/>
<rect x="372.1" y="545.2" width="1.7" height="36.8" fill="#404040"/>
<rect x="275" y="580.7" width="98.8" height="1.3" fill="#404040"/>
<text class="t" x="285.3" y="567.51" textLength="78.7" lengthAdjust="spacingAndGlyphs" fill="#ffffff">基准领域标记识别</text>
<text class="t" x="284.5" y="566.71" textLength="78.7" lengthAdjust="spacingAndGlyphs" fill="#808080">基准领域标记识别</text>
<rect x="391" y="545.2" width="97.9" height="36.8" fill="#d4d0c8"/>
<rect x="391" y="545.2" width="96.7" height="1.1" fill="#ffffff"/>
<rect x="391" y="545.2" width="1.2" height="35.6" fill="#ffffff"/>
<rect x="486.7" y="546.3" width="0.6" height="34.4" fill="#808080"/>
<rect x="392.2" y="580.1" width="95.1" height="0.6" fill="#808080"/>
<rect x="487.2" y="545.2" width="1.7" height="36.8" fill="#404040"/>
<rect x="391" y="580.7" width="97.9" height="1.3" fill="#404040"/>
<text class="t" x="420" y="566.71" textLength="38.8" lengthAdjust="spacingAndGlyphs" fill="#000000">传送控制</text>
<rect x="599" y="545" width="98.2" height="37" fill="#000000"/>
<rect x="599.8" y="545.8" width="96.6" height="35.4" fill="#d4d0c8"/>
<rect x="599.8" y="545.8" width="95.4" height="1.1" fill="#ffffff"/>
<rect x="599.8" y="545.8" width="1.2" height="34.2" fill="#ffffff"/>
<rect x="694.2" y="546.9" width="0.6" height="33" fill="#808080"/>
<rect x="601" y="579.3" width="93.8" height="0.6" fill="#808080"/>
<rect x="694.7" y="545.8" width="1.7" height="35.4" fill="#404040"/>
<rect x="599.8" y="579.9" width="96.6" height="1.3" fill="#404040"/>
<text class="t" x="638.2" y="566.61" textLength="19.8" lengthAdjust="spacingAndGlyphs" fill="#000000">确定</text>
<rect x="720.8" y="545.2" width="98.4" height="36.8" fill="#d4d0c8"/>
<rect x="720.8" y="545.2" width="97.2" height="1.1" fill="#ffffff"/>
<rect x="720.8" y="545.2" width="1.2" height="35.6" fill="#ffffff"/>
<rect x="817" y="546.3" width="0.6" height="34.4" fill="#808080"/>
<rect x="722" y="580.1" width="95.6" height="0.6" fill="#808080"/>
<rect x="817.5" y="545.2" width="1.7" height="36.8" fill="#404040"/>
<rect x="720.8" y="580.7" width="98.4" height="1.3" fill="#404040"/>
<text class="t" x="760.1" y="566.71" textLength="19.8" lengthAdjust="spacingAndGlyphs" fill="#000000">取消</text>
</svg>
</body></html>
